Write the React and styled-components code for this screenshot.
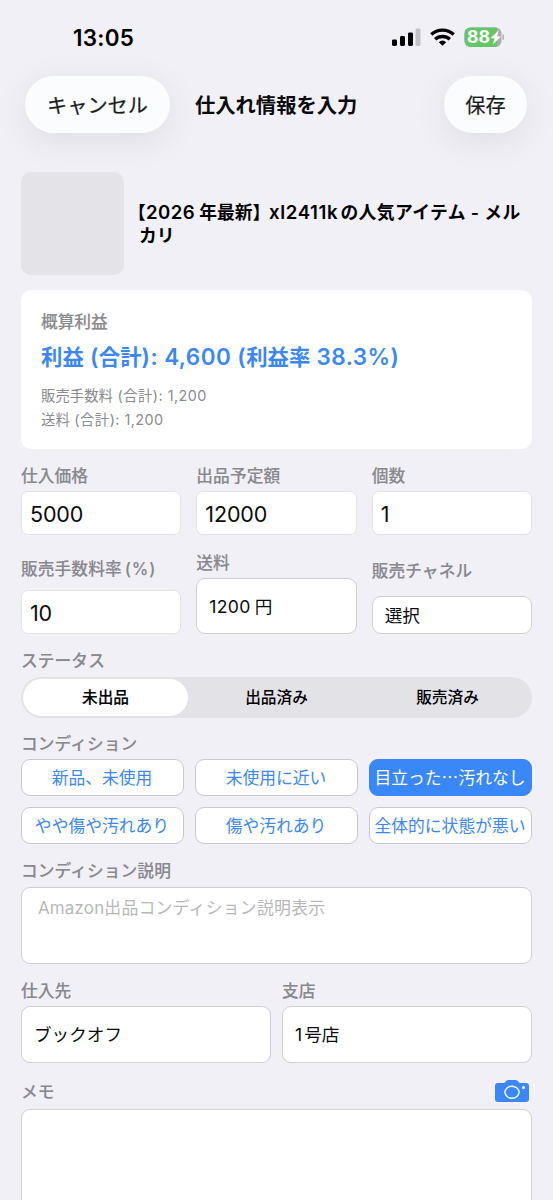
import React from "react";
import styled, { createGlobalStyle } from "styled-components";

const GlobalStyle = createGlobalStyle`
  html, body { margin: 0; padding: 0; background: #f1f0f6; }
  body { height: 1200px; overflow: hidden; }
  * { box-sizing: border-box; }
  button, input, textarea { font: inherit; color: inherit; margin: 0; outline: none; }
`;

const Screen = styled.main`
  width: 553px;
  height: 1200px;
  overflow: hidden;
  background: #f1f0f6;
  color: #0b0b0c;
  font-family: Inter, "Noto Sans CJK JP", sans-serif;
  -webkit-font-smoothing: antialiased;
`;

const StatusBar = styled.div`
  height: 76px;
  padding: 0 49px 0 73px;
  display: flex;
  align-items: center;
  justify-content: space-between;
`;

const Time = styled.time`
  font-size: 22.4px;
  line-height: 30px;
  font-weight: 600;
  letter-spacing: 0.3px;
  color: #000;
`;

const StatusIcons = styled.svg`
  display: block;
  width: 114px;
  height: 24px;
  margin-bottom: 4px;
`;

const NavBar = styled.header`
  height: 57px;
  padding: 0 26px 0 25px;
  display: grid;
  grid-template-columns: 145px 1fr 83px;
  align-items: center;
`;

const NavTitle = styled.h1`
  margin: 0;
  padding: 2px 0 0 25px;
  font-size: 20.3px;
  line-height: 30px;
  font-weight: 600;
`;

const PillButton = styled.button`
  height: 57px;
  padding: 2px 0 0;
  border: 0;
  border-radius: 29px;
  background: #fbfcfe;
  color: #1b1b1d;
  font-size: 20.2px;
  line-height: 30px;
  -webkit-text-stroke: 0.2px currentColor;
  box-shadow: 0 8px 34px rgba(30, 30, 40, 0.085);
`;

const Form = styled.div`
  padding: 38px 21px 0;
`;

const Product = styled.section`
  height: 104px;
  display: flex;
  align-items: center;
  gap: 13px;
`;

const Thumb = styled.div`
  width: 103px;
  height: 103px;
  flex: none;
  border-radius: 10px;
  background: #e4e3e8;
`;

const ProductName = styled.h2`
  margin: 0;
  padding-top: 1px;
  font-size: 17.8px;
  line-height: 23px;
  font-weight: 600;
  color: #000;
  white-space: nowrap;
`;

const Bracket = styled.span`
  font-feature-settings: "halt";
  margin: 0 ${(p) => p.$after || 0}px 0 ${(p) => p.$before || 0}px;
`;

const Run = styled.span`
  letter-spacing: ${(p) => p.$track || 0}px;
  margin-right: ${(p) => p.$gap || 0}px;
`;

const LatinRun = styled(Run)`
  font-size: 18.6px;
  line-height: 1;
`;

const SecondLine = styled.span`
  display: block;
  padding-left: 2px;
`;

const ProfitCard = styled.section`
  height: 159px;
  margin-top: 15px;
  padding: 20px 20px;
  border-radius: 10px;
  background: #fff;
  color: #8b8b8e;
`;

const ProfitCaption = styled.div`
  font-size: 16.7px;
  line-height: 24px;
  font-weight: 500;
  -webkit-text-stroke: 0.15px currentColor;
`;

const ProfitTotal = styled.div`
  margin: 7px 0 11px;
  font-size: 21.4px;
  line-height: 32px;
  font-weight: 600;
  color: #3a87f7;
  white-space: nowrap;
`;

const Figure = styled.span`
  font-size: 22.5px;
  line-height: 1;
  letter-spacing: 0.45px;
`;

const ProfitDetail = styled.div`
  font-size: 14.4px;
  line-height: 24px;
`;

const Columns = styled.div`
  display: grid;
  grid-template-columns: repeat(${(p) => p.$count}, 1fr);
  column-gap: ${(p) => p.$gap}px;
  row-gap: 11px;
  align-items: end;
  margin-top: ${(p) => p.$top || 0}px;
`;

const Field = styled.label`
  display: block;
  min-width: 0;
`;

const Label = styled.span`
  display: block;
  height: 24px;
  margin-top: ${(p) => p.$top || 0}px;
  margin-bottom: ${(p) => p.$bottom || 0}px;
  font-size: 16.7px;
  line-height: 26px;
  font-weight: 500;
  letter-spacing: 0.1px;
  color: #88888d;
  white-space: nowrap;
  -webkit-text-stroke: 0.12px currentColor;
`;

const TextInput = styled.input`
  display: block;
  width: 100%;
  height: 44px;
  padding: 2px 8px 0;
  border: 1px solid #e3e3e7;
  border-radius: 7px;
  background: #fff;
  font-size: 21.5px;
  letter-spacing: -0.15px;
`;

const Picker = styled.div`
  height: ${(p) => p.$height}px;
  padding: 1px 12px 0;
  display: flex;
  align-items: center;
  border: 1px solid #cfcfd4;
  border-radius: 9px;
  background: #fff;
  font-size: 17.6px;
  line-height: 26px;
`;

const Segmented = styled.div`
  height: 41px;
  padding: 2px;
  display: grid;
  grid-template-columns: repeat(3, 1fr);
  column-gap: 6px;
  border-radius: 21px;
  background: #e3e2e7;
`;

const Segment = styled.button`
  padding: 0;
  border: 0;
  border-radius: 19px;
  width: 100%;
  background: ${(p) => (p.$active ? "#fff" : "transparent")};
  font-size: 15.7px;
  line-height: 22px;
  font-weight: 500;
  -webkit-text-stroke: ${(p) => (p.$active ? 0.15 : 0)}px currentColor;
  color: #000;
`;

const Chip = styled.button`
  height: 37px;
  padding: 0 1px 0 0;
  border: 1px solid ${(p) => (p.$active ? "#3a87f7" : "#c9c9cc")};
  border-radius: 9px;
  background: ${(p) => (p.$active ? "#3a87f7" : "#fff")};
  color: ${(p) => (p.$active ? "#fff" : "#3a87f7")};
  font-size: 16.8px;
  line-height: 24px;
  white-space: nowrap;
`;

const TextArea = styled.textarea`
  display: block;
  width: 100%;
  height: ${(p) => p.$height}px;
  padding: 7px 16px;
  border: 1px solid #cfcfd4;
  border-radius: 9px;
  background: #fff;
  font-size: 16.9px;
  line-height: 26px;
  letter-spacing: 0.2px;
  resize: none;
  &::placeholder { color: #b7b7b9; opacity: 1; }
`;

const MemoHead = styled.div`
  margin-top: 16px;
  height: 30px;
  padding-right: 3px;
  display: flex;
  align-items: flex-start;
  justify-content: space-between;
`;

const CameraIcon = styled.svg`
  display: block;
  width: 34px;
  height: 22px;
  margin-top: 1px;
`;

const BatteryText = styled.text`
  font: 700 17px Inter, sans-serif;
  fill: #fff;
`;

const conditions = ["新品、未使用", "未使用に近い", "目立った⋯汚れなし", "やや傷や汚れあり", "傷や汚れあり", "全体的に状態が悪い"];
const statuses = ["未出品", "出品済み", "販売済み"];

function PhoneStatus() {
  return (
    <StatusIcons viewBox="0 0 114 24" aria-hidden="true">
      <rect x="2" y="15.5" width="5" height="6.5" rx="1.4" />
      <rect x="10" y="12" width="5" height="10" rx="1.4" />
      <rect x="18" y="8.5" width="5" height="13.5" rx="1.4" />
      <rect x="25.5" y="4.5" width="5" height="17.5" rx="1.4" fill="#c2c1c6" />
      <g fill="none" stroke="#000" strokeWidth="3.4">
        <path d="M41.3 10.6a16.3 16.3 0 0 1 22.4 0" />
        <path d="M45.2 15.3a10.8 10.8 0 0 1 14.6 0" />
      </g>
      <path d="M52.5 21.8l-3.7-3.6a5.6 5.6 0 0 1 7.4 0z" />
      <clipPath id="battery"><rect x="74.5" y="3.5" width="37" height="19.5" rx="6" /></clipPath>
      <g clipPath="url(#battery)">
        <rect x="74" y="3" width="38" height="21" fill="#acabb0" />
        <rect x="74" y="3" width="33" height="21" fill="#65c667" />
      </g>
      <path d="M112.5 10.2c2.4 1 2.4 5 0 6z" fill="#acabb0" />
      <BatteryText x="77" y="19.3" textLength="23" lengthAdjust="spacingAndGlyphs">88</BatteryText>
      <path d="M108.5 6.5l-8 7.7h4l-1.5 6 8-7.7h-4z" fill="#fff" />
    </StatusIcons>
  );
}

export default function App() {
  return (
    <Screen lang="ja">
      <GlobalStyle />
      <StatusBar>
        <Time>13:05</Time>
        <PhoneStatus />
      </StatusBar>
      <NavBar>
        <PillButton>キャンセル</PillButton>
        <NavTitle>仕入れ情報を入力</NavTitle>
        <PillButton>保存</PillButton>
      </NavBar>
      <Form>
        <Product>
          <Thumb />
          <ProductName>
            <Bracket>【</Bracket>
            <LatinRun $track={0.5} $gap={4}>2026</LatinRun>年最新<Bracket $after={3}>】</Bracket>{" "}
            <LatinRun $track={0.65} $gap={2}>xl2411k</LatinRun>
            <Run $track={0.4}>の人気アイテム - メル</Run>
            <SecondLine>カリ</SecondLine>
          </ProductName>
        </Product>
        <ProfitCard>
          <ProfitCaption>概算利益</ProfitCaption>
          <ProfitTotal>
            利益<Figure> (</Figure>合計<Figure>): 4,600 (</Figure>利益率<Figure> 38.3%)</Figure>
          </ProfitTotal>
          <ProfitDetail>販売手数料<Run $track={0.45}> (合計): 1,200</Run></ProfitDetail>
          <ProfitDetail>送料<Run $track={0.45}> (合計): 1,200</Run></ProfitDetail>
        </ProfitCard>
        <Columns $count={3} $gap={15} $top={14}>
          <Field><Label $bottom={4}>仕入価格</Label><TextInput defaultValue="5000" /></Field>
          <Field><Label $bottom={4}>出品予定額</Label><TextInput defaultValue="12000" /></Field>
          <Field><Label $bottom={4}>個数</Label><TextInput defaultValue="1" /></Field>
        </Columns>
        <Columns $count={3} $gap={15} $top={15}>
          <Field><Label $bottom={10}><Run $track={0.1} $gap={3}>販売手数料率</Run><Run $track={0.9}>(%)</Run></Label><TextInput defaultValue="10" /></Field>
          <Field><Label $bottom={4}>送料</Label><Picker $height={56}><Run $track={0.3} $gap={4}>1200</Run>円</Picker></Field>
          <Field><Label $bottom={14}>販売チャネル</Label><Picker $height={38}>選択</Picker></Field>
        </Columns>
        <Label $top={14} $bottom={5}>ステータス</Label>
        <Segmented>
          {statuses.map((s, i) => <Segment key={s} $active={i === 0}>{s}</Segment>)}
        </Segmented>
        <Label $top={13} $bottom={4}>コンディション</Label>
        <Columns $count={3} $gap={11}>
          {conditions.map((c, i) => <Chip key={c} $active={i === 2}>{c}</Chip>)}
        </Columns>
        <Label $top={14} $bottom={5}>コンディション説明</Label>
        <TextArea $height={77} placeholder="Amazon出品コンディション説明表示" />
        <Columns $count={2} $gap={11} $top={14}>
          <Field><Label $bottom={4}>仕入先</Label><Picker $height={57}>ブックオフ</Picker></Field>
          <Field><Label $bottom={4}>支店</Label><Picker $height={57}><Run $gap={2}>1</Run>号店</Picker></Field>
        </Columns>
        <MemoHead>
          <Label>メモ</Label>
          <CameraIcon viewBox="0 0 34 22" aria-hidden="true">
            <path d="M3 3h6.3l2.2-2.2q.8-.8 2-.8h7q1.2 0 2 .8L24.7 3H31q3 0 3 3v13q0 3-3 3H3q-3 0-3-3V6q0-3 3-3z" fill="#3a87f7" />
            <ellipse cx="17" cy="12.2" rx="7" ry="6" fill="none" stroke="#fff" strokeWidth="1.4" />
            <circle cx="28.5" cy="7.5" r="1.5" fill="#fff" />
          </CameraIcon>
        </MemoHead>
        <TextArea $height={140} />
      </Form>
    </Screen>
  );
}
